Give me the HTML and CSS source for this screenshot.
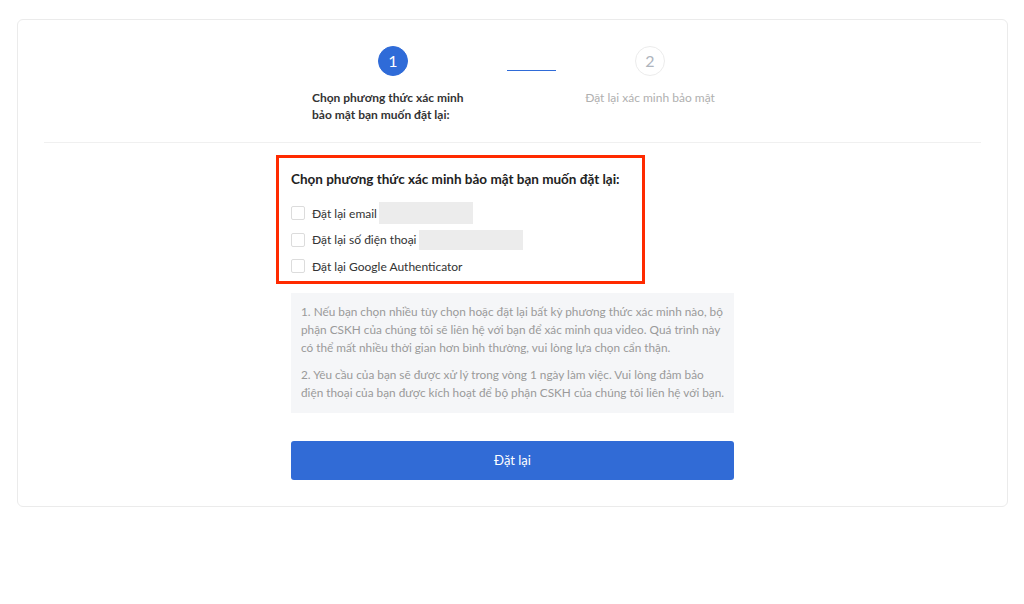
FILE: index.html
```html
<!DOCTYPE html>
<html>
  <head>
    <title>Đặt lại xác minh bảo mật</title>
    <meta name="viewport" content="width=device-width, initial-scale=1">
    <link rel="stylesheet" href="styles.css">
  </head>
  <body>
    <div class="card">
      <div class="steps">
        <div class="step active">
          <div class="num">1</div>
          <div class="label">Chọn phương thức xác minh<br>bảo mật bạn muốn đặt lại:</div>
        </div>
        <div class="connector"></div>
        <div class="step">
          <div class="num">2</div>
          <div class="label">Đặt lại xác minh bảo mật</div>
        </div>
      </div>
      <div class="form">
        <div class="choose">
          <h4>Chọn phương thức xác minh bảo mật bạn muốn đặt lại:</h4>
          <label class="option"><span class="box"></span>Đặt lại email <span class="masked email"></span></label>
          <label class="option"><span class="box"></span>Đặt lại số điện thoại <span class="masked phone"></span></label>
          <label class="option"><span class="box"></span>Đặt lại Google Authenticator</label>
          <div class="highlight"></div>
        </div>
        <div class="notes">
          <p>1. Nếu bạn chọn nhiều tùy chọn hoặc đặt lại bất kỳ phương thức xác minh nào, bộ phận CSKH của chúng tôi sẽ liên hệ với bạn để xác minh qua video. Quá trình này có thể mất nhiều thời gian hơn bình thường, vui lòng lựa chọn cẩn thận.</p>
          <p>2. Yêu cầu của bạn sẽ được xử lý trong vòng 1 ngày làm việc. Vui lòng đảm bảo điện thoại của bạn được kích hoạt để bộ phận CSKH của chúng tôi liên hệ với bạn.</p>
        </div>
        <button class="submit">Đặt lại</button>
      </div>
    </div>
  </body>
</html>
```

FILE: styles.css
```css
body {
  margin: 0;
  background: #fff;
  font-family: Lato, "Noto Sans", Arial, sans-serif;
  color: #333;
}
.card {
  margin: 19px 16px 0 17px;
  border: 1px solid #ebebeb;
  border-radius: 6px;
  padding: 26px 26px 26px;
}
.steps {
  display: flex;
  justify-content: center;
  padding: 0 0 19px 18px;
  border-bottom: 1px solid #f0f0f0;
}
.step {
  width: 162px;
  display: flex;
  flex-direction: column;
  align-items: center;
}
.num {
  width: 28px;
  height: 28px;
  border-radius: 50%;
  border: 1px solid #ececec;
  color: #aeb4bd;
  font-size: 16px;
  line-height: 28px;
  text-align: center;
}
.step.active .num {
  background: #2f6bd8;
  border-color: #2f6bd8;
  color: #fff;
}
.label {
  margin-top: 13px;
  font-size: 12px;
  line-height: 17px;
  color: #b0b0b0;
  text-align: center;
  white-space: nowrap;
}
.step.active .label {
  align-self: flex-start;
  text-align: left;
  color: #333;
  font-weight: 700;
}
.connector {
  width: 49px;
  height: 1px;
  background: #2f6bd8;
  margin: 24px 13px 0 33px;
}
.form {
  width: 443px;
  margin: 0 auto;
  padding-top: 27px;
}
.choose {
  position: relative;
}
.choose h4 {
  margin: 0 0 12px;
  font-size: 13.5px;
  line-height: 18px;
  font-weight: 700;
  color: #222;
}
.option {
  display: flex;
  align-items: center;
  height: 26.5px;
  font-size: 12px;
  color: #333;
}
.box {
  width: 12px;
  height: 12px;
  border: 1px solid #dcdcdc;
  border-radius: 2px;
  margin-right: 7px;
}
.masked {
  display: inline-block;
  background: #ececec;
  margin-left: 2px;
}
.masked.email {
  width: 94px;
  height: 22px;
}
.masked.phone {
  width: 104px;
  height: 20px;
}
.highlight {
  position: absolute;
  left: -15px;
  right: 89px;
  top: -15px;
  bottom: -4px;
  border: 3px solid #ff2a00;
}
.notes {
  margin-top: 13px;
  background: #f5f6f8;
  padding: 10px 8px 11px 10px;
  font-size: 11.8px;
  line-height: 18px;
  color: #9a9a9a;
}
.notes p {
  margin: 0 0 9px;
}
.notes p:last-child {
  margin: 0;
}
.submit {
  display: block;
  width: 100%;
  height: 39px;
  margin-top: 28px;
  border: none;
  border-radius: 3px;
  background: #316bd6;
  color: #fff;
  font-family: inherit;
  font-size: 13px;
}
```
